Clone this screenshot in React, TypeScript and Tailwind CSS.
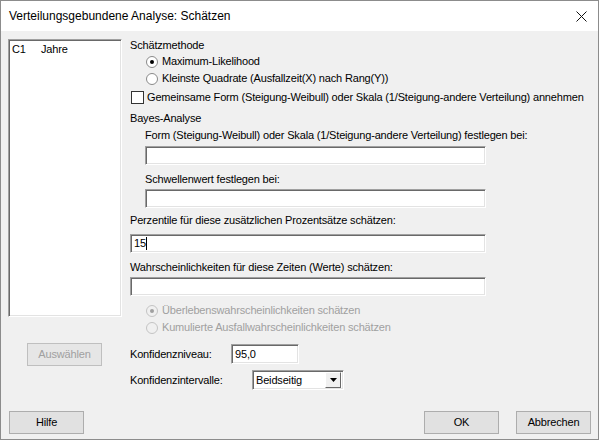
export default function App() {
  const sunken =
    "bg-white border-t border-l border-t-[#a0a0a0] border-l-[#a0a0a0] border-b border-r border-b-white border-r-white shadow-[inset_1px_1px_0_#696969,inset_-1px_-1px_0_#e3e3e3]";
  const button =
    "w-[75px] h-[23px] flex items-center justify-center bg-[#e1e1e1] border border-[#adadad]";

  const Radio = ({ checked, disabled }: { checked?: boolean; disabled?: boolean }) => (
    <span
      className={
        "w-[12px] h-[12px] rounded-full flex items-center justify-center border " +
        (disabled ? "bg-[#f0f0f0] border-[#c4c4c4]" : "bg-white border-[#8a8a8a]")
      }
    >
      {checked && (
        <span className={"w-[4px] h-[4px] rounded-full " + (disabled ? "bg-[#a0a0a0]" : "bg-black")} />
      )}
    </span>
  );

  return (
    <div className="w-[599px] h-[440px] bg-[#f0f0f0] border border-[#8c8c8c] flex flex-col font-['Liberation_Sans',sans-serif] text-[11px] leading-[13px] tracking-[-0.17px] text-black whitespace-nowrap">
      {/* Title bar */}
      <div className="h-[30px] bg-white flex items-center justify-between pl-[8px] pr-[10px] tracking-normal">
        <span className="text-[12px] leading-[16px]">Verteilungsgebundene Analyse: Schätzen</span>
        <svg width="11" height="11" viewBox="0 0 11 11" className="mr-[1px]">
          <path d="M0.5 0.5 L10.5 10.5 M10.5 0.5 L0.5 10.5" stroke="#111" strokeWidth="1" />
        </svg>
      </div>

      {/* Body */}
      <div className="flex pl-[7px] pt-[8px]">
        {/* Left column */}
        <div className="w-[114px] shrink-0 flex flex-col">
          <div className={sunken + " h-[278px] pl-[3px] pt-[3px]"}>
            <div className="flex">
              <span className="w-[29px]">C1</span>
              <span>Jahre</span>
            </div>
          </div>
          <div className={button + " ml-[19px] mt-[26px] text-[#a0a0a0] bg-[#e6e6e6] border-[#bfbfbf]"}>
            Auswählen
          </div>
        </div>

        {/* Right column */}
        <div className="ml-[8px] flex flex-col">
          <div>Schätzmethode</div>
          <div className="flex items-center gap-[4px] ml-[16px] mt-[3px]">
            <Radio checked />
            <span>Maximum-Likelihood</span>
          </div>
          <div className="flex items-center gap-[4px] ml-[16px] mt-[4px]">
            <Radio />
            <span>Kleinste Quadrate (Ausfallzeit(X) nach Rang(Y))</span>
          </div>
          <div className="flex items-center gap-[3px] ml-[1px] mt-[6px]">
            <span className="w-[13px] h-[13px] bg-white border border-[#333]" />
            <span>Gemeinsame Form (Steigung-Weibull) oder Skala (1/Steigung-andere Verteilung) annehmen</span>
          </div>
          <div className="mt-[8px]">Bayes-Analyse</div>
          <div className="ml-[15px] mt-[4px]">
            Form (Steigung-Weibull) oder Skala (1/Steigung-andere Verteilung) festlegen bei:
          </div>
          <div className={sunken + " ml-[15px] mt-[4px] w-[341px] h-[19px]"} />
          <div className="ml-[15px] mt-[8px]">Schwellenwert festlegen bei:</div>
          <div className={sunken + " ml-[15px] mt-[3px] w-[341px] h-[19px]"} />
          <div className="mt-[6px]">Perzentile für diese zusätzlichen Prozentsätze schätzen:</div>
          <div className={sunken + " mt-[7px] w-[356px] h-[19px] flex items-center pl-[3px]"}>
            <span>15</span>
            <span className="w-px h-[13px] bg-black" />
          </div>
          <div className="mt-[8px]">Wahrscheinlichkeiten für diese Zeiten (Werte) schätzen:</div>
          <div className={sunken + " mt-[3px] w-[356px] h-[19px]"} />
          <div className="flex items-center gap-[4px] ml-[16px] mt-[8px] text-[#a0a0a0]">
            <Radio checked disabled />
            <span>Überlebenswahrscheinlichkeiten schätzen</span>
          </div>
          <div className="flex items-center gap-[4px] ml-[16px] mt-[4px] text-[#a0a0a0]">
            <Radio disabled />
            <span>Kumulierte Ausfallwahrscheinlichkeiten schätzen</span>
          </div>
          <div className="flex items-center mt-[10px]">
            <span className="w-[101px]">Konfidenzniveau:</span>
            <div className={sunken + " w-[68px] h-[20px] flex items-center pl-[3px]"}>95,0</div>
          </div>
          <div className="flex items-center mt-[6px]">
            <span className="w-[122px]">Konfidenzintervalle:</span>
            <div className={sunken + " w-[92px] h-[20px] flex items-center justify-between pl-[3px] pr-[2px]"}>
              <span>Beidseitig</span>
              <span className="w-[16px] h-[16px] bg-[#f0f0f0] border border-t-white border-l-white border-b-[#696969] border-r-[#696969] flex items-center justify-center">
                <svg width="7" height="4" viewBox="0 0 7 4">
                  <path d="M0 0 H7 L3.5 4 Z" fill="#000" />
                </svg>
              </span>
            </div>
          </div>
        </div>
      </div>

      {/* Footer */}
      <div className="mt-auto flex items-center pl-[8px] pr-[7px] pb-[5px]">
        <div className={button}>Hilfe</div>
        <div className="flex-1" />
        <div className={button + " border-[#555]"}>OK</div>
        <div className={button + " ml-[17px]"}>Abbrechen</div>
      </div>
    </div>
  );
}
